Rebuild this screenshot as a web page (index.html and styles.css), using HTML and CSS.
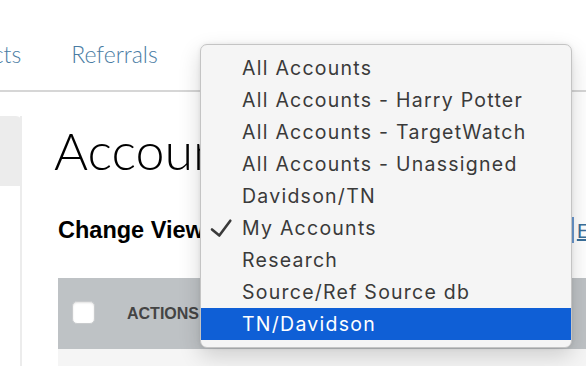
FILE: index.html
```html
<!DOCTYPE html>
<html lang="en">

<head>
    <meta charset="UTF-8">
    <meta name="viewport" content="width=device-width, initial-scale=1.0">
    <title>Accounts</title>
    <link rel="stylesheet" href="styles.css">
</head>

<body>
    <nav class="top-nav">
        <a href="#" class="nav-link">Contacts</a>
        <a href="#" class="nav-link">Referrals</a>
    </nav>

    <div class="main">
        <aside class="sidebar">
            <div class="sidebar-head"></div>
        </aside>

        <div class="content">
            <h1 class="page-title">Accounts</h1>

            <div class="view-row">
                <span class="view-label">Change View</span>
                <span class="view-select">My Accounts</span>
                <a href="#" class="view-edit">Edit</a>
            </div>

            <div class="table">
                <div class="table-head">
                    <span class="check"></span>
                    <span class="col-title">ACTIONS</span>
                </div>
                <div class="table-row"></div>
            </div>
        </div>
    </div>

    <!-- open select menu -->
    <ul class="menu">
        <li>All Accounts</li>
        <li>All Accounts - Harry Potter</li>
        <li>All Accounts - TargetWatch</li>
        <li>All Accounts - Unassigned</li>
        <li>Davidson/TN</li>
        <li class="checked">
            <svg class="tick" width="40" height="32" viewBox="0 0 40 32">
                <polyline points="11,17.5 18.3,23.5 29.3,8.7" fill="none" stroke="#3a3a3a" stroke-width="2.6" stroke-linecap="round" stroke-linejoin="round" />
            </svg>
            My Accounts
        </li>
        <li>Research</li>
        <li>Source/Ref Source db</li>
        <li class="selected">TN/Davidson</li>
    </ul>
</body>

</html>
```

FILE: styles.css
```css
* {
    box-sizing: border-box;
}

body {
    margin: 0;
    width: 586px;
    height: 366px;
    overflow: hidden;
    background-color: white;
    font-family: "Liberation Sans", Arial, sans-serif;
    position: relative;
}

.top-nav {
    height: 92px;
    border-bottom: 2px solid #d6d6d6;
    display: flex;
    gap: 50px;
    padding-top: 39px;
    margin-left: -67px;
}

.nav-link {
    font-family: Lato, sans-serif;
    font-weight: 300;
    font-size: 23px;
    color: #4a7ca3;
    text-decoration: none;
    line-height: 30px;
}

.main {
    display: flex;
    height: 274px;
    overflow: hidden;
}

.sidebar {
    flex: 0 0 22px;
    margin-top: 24px;
    border-right: 2px solid #ececec;
}

.sidebar-head {
    height: 70px;
    margin-right: -2px;
    background-color: #ececec;
    border-top-right-radius: 6px;
}

.content {
    flex: 1;
    min-width: 0;
    margin-left: 36px;
}

.page-title {
    margin: 28px 0 0 -4px;
    font-family: Lato, sans-serif;
    font-weight: 300;
    font-size: 52px;
    line-height: 60px;
    color: black;
    white-space: nowrap;
}

.view-row {
    margin-top: 37px;
    height: 26px;
    display: flex;
    align-items: center;
}

.view-label {
    font-weight: bold;
    font-size: 23.5px;
    color: black;
    white-space: nowrap;
}

.view-select {
    flex: 0 0 360px;
    height: 26px;
    margin-left: 10px;
    border-right: 2px solid #6b98d0;
    color: transparent;
}

.view-edit {
    margin-left: 3px;
    font-family: Lato, sans-serif;
    font-size: 20px;
    color: #3a6f9a;
    white-space: nowrap;
}

.table {
    margin-top: 35px;
}

.table-head {
    height: 71px;
    background-color: #bec2c5;
    display: flex;
    align-items: center;
    padding-left: 14px;
}

.check {
    width: 23px;
    height: 23px;
    background-color: white;
    border: 1px solid #c9cbcd;
    border-radius: 5px;
    box-shadow: inset 0 1px 2px rgba(0, 0, 0, 0.12);
    margin-top: -2px;
}

.col-title {
    margin-left: 32px;
    font-weight: bold;
    font-size: 16px;
    color: #444;
}

.table-row {
    height: 40px;
    background-color: #f5f5f5;
}

/* open dropdown */
.menu {
    position: absolute;
    left: 200px;
    top: 44px;
    width: 372px;
    margin: 0;
    padding: 7px 0 7px 0;
    list-style: none;
    background-color: #f5f5f5;
    border: 1px solid #c4c4c4;
    border-radius: 7px;
    box-shadow: 0 8px 22px rgba(0, 0, 0, 0.16), 0 0 4px rgba(0, 0, 0, 0.08);
    font-family: Inter, "Noto Sans", sans-serif;
    font-size: 19.5px;
    letter-spacing: 1.25px;
    color: #3a3a3a;
}

.menu li {
    height: 32px;
    line-height: 33px;
    padding-left: 41px;
    position: relative;
    white-space: nowrap;
}

.menu li.selected {
    background-color: #0f5fd6;
    color: white;
}

.tick {
    position: absolute;
    left: 0;
    top: 0;
}
```
